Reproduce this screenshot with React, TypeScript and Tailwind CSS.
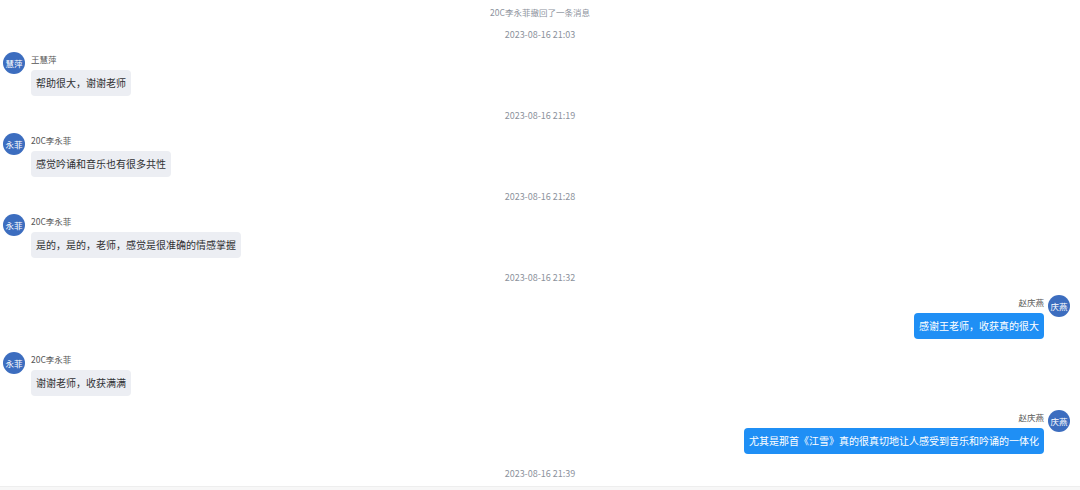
import React from 'react'

type Item =
  | { kind: 'notice'; text: string; cls: string }
  | { kind: 'time'; text: string; cls: string }
  | { kind: 'msg'; side: 'left' | 'right'; name: string; avatar: string; text: string; cls: string }

const items: Item[] = [
  { kind: 'notice', text: '20C李永菲撤回了一条消息', cls: 'text-[8.5px]' },
  { kind: 'time', text: '2023-08-16 21:03', cls: 'text-[9px] mt-[3px] mb-[7px]' },
  { kind: 'msg', side: 'left', name: '王慧萍', avatar: '慧萍', text: '帮助很大，谢谢老师', cls: '' },
  { kind: 'time', text: '2023-08-16 21:19', cls: 'text-[9px] mt-[10px] mb-[7px]' },
  { kind: 'msg', side: 'left', name: '20C李永菲', avatar: '永菲', text: '感觉吟诵和音乐也有很多共性', cls: '' },
  { kind: 'time', text: '2023-08-16 21:28', cls: 'text-[9px] mt-[10px] mb-[7px]' },
  { kind: 'msg', side: 'left', name: '20C李永菲', avatar: '永菲', text: '是的，是的，老师，感觉是很准确的情感掌握', cls: '' },
  { kind: 'time', text: '2023-08-16 21:32', cls: 'text-[9px] mt-[10px] mb-[7px]' },
  { kind: 'msg', side: 'right', name: '赵庆燕', avatar: '庆燕', text: '感谢王老师，收获真的很大', cls: '' },
  { kind: 'msg', side: 'left', name: '20C李永菲', avatar: '永菲', text: '谢谢老师，收获满满', cls: 'mt-[13px]' },
  {
    kind: 'msg',
    side: 'right',
    name: '赵庆燕',
    avatar: '庆燕',
    text: '尤其是那首《江雪》真的很真切地让人感受到音乐和吟诵的一体化',
    cls: 'mt-[14px]',
  },
  { kind: 'time', text: '2023-08-16 21:39', cls: 'text-[9px] mt-[10px]' },
]

function Avatar({ label }: { label: string }) {
  return (
    <div className="w-[22px] h-[22px] shrink-0 rounded-full bg-[#3c6dbf] text-white text-[8.5px] flex items-center justify-center">
      {label}
    </div>
  )
}

function Message({ item }: { item: Extract<Item, { kind: 'msg' }> }) {
  const right = item.side === 'right'
  return (
    <div className={`flex ${right ? 'flex-row-reverse pr-[10px] gap-[4px]' : 'pl-[3px] gap-[6px]'} ${item.cls}`}>
      <Avatar label={item.avatar} />
      <div className={`flex flex-col ${right ? 'items-end' : 'items-start'}`}>
        <div className="h-[14px] leading-[14px] text-[8.5px] text-[#555]">{item.name}</div>
        <div
          className={`mt-[4px] px-[5px] py-[6px] rounded-[4px] text-[10px] leading-[14px] whitespace-nowrap ${
            right ? 'bg-[#1f8ff5] text-white' : 'bg-[#eceef3] text-[#303133]'
          }`}
        >
          {item.text}
        </div>
      </div>
    </div>
  )
}

export default function App() {
  return (
    <div
      className="w-[1080px] h-[490px] overflow-hidden bg-white flex flex-col"
      style={{ fontFamily: '"Noto Sans CJK SC", "Noto Sans", sans-serif' }}
    >
      <div className="flex-1 flex flex-col pt-[2px]">
        {items.map((item, i) => {
          if (item.kind === 'msg') return <Message key={i} item={item} />
          return (
            <div key={i} className={`h-[20px] leading-[20px] text-center text-[#8c929c] ${item.cls}`}>
              {item.text}
            </div>
          )
        })}
      </div>
      <div className="h-[4px] border-t border-[#eeeeee] bg-[#f7f7f7]" />
    </div>
  )
}
